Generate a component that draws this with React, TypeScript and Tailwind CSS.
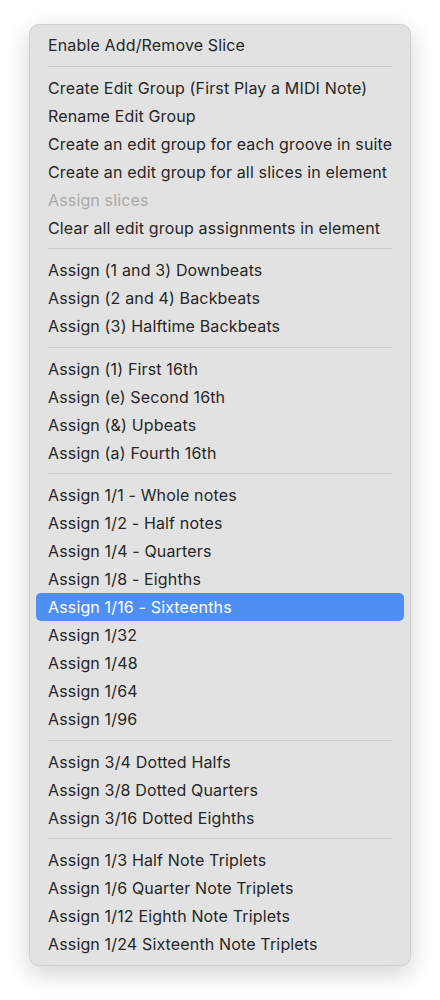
const groups: { label: string; disabled?: boolean; active?: boolean }[][] = [
  [{ label: "Enable Add/Remove Slice" }],
  [
    { label: "Create Edit Group (First Play a MIDI Note)" },
    { label: "Rename Edit Group" },
    { label: "Create an edit group for each groove in suite" },
    { label: "Create an edit group for all slices in element" },
    { label: "Assign slices", disabled: true },
    { label: "Clear all edit group assignments in element" },
  ],
  [
    { label: "Assign (1 and 3) Downbeats" },
    { label: "Assign (2 and 4) Backbeats" },
    { label: "Assign (3) Halftime Backbeats" },
  ],
  [
    { label: "Assign (1) First 16th" },
    { label: "Assign (e) Second 16th" },
    { label: "Assign (&) Upbeats" },
    { label: "Assign (a) Fourth 16th" },
  ],
  [
    { label: "Assign 1/1 - Whole notes" },
    { label: "Assign 1/2 - Half notes" },
    { label: "Assign 1/4 - Quarters" },
    { label: "Assign 1/8 - Eighths" },
    { label: "Assign 1/16 - Sixteenths", active: true },
    { label: "Assign 1/32" },
    { label: "Assign 1/48" },
    { label: "Assign 1/64" },
    { label: "Assign 1/96" },
  ],
  [
    { label: "Assign 3/4 Dotted Halfs" },
    { label: "Assign 3/8 Dotted Quarters" },
    { label: "Assign 3/16 Dotted Eighths" },
  ],
  [
    { label: "Assign 1/3 Half Note Triplets" },
    { label: "Assign 1/6 Quarter Note Triplets" },
    { label: "Assign 1/12 Eighth Note Triplets" },
    { label: "Assign 1/24 Sixteenth Note Triplets" },
  ],
];

export default function App() {
  return (
    <div className="min-h-screen bg-white pt-[24px] pl-[29px]">
      <div
        className="w-[382px] rounded-[10px] border border-[#cfcfcf] bg-[#e2e2e2] px-[6px] pt-[6px] pb-[7px] shadow-[0_8px_24px_rgba(0,0,0,0.18)]"
        style={{ fontFamily: "Inter, 'Noto Sans', sans-serif" }}
      >
        {groups.map((group, gi) => (
          <div key={gi}>
            {gi > 0 && (
              <div className="flex h-[14.5px] items-center px-[12px]">
                <div className="h-px w-full bg-[#c8c8c8]" />
              </div>
            )}
            {group.map((item) => (
              <div
                key={item.label}
                className={
                  "flex h-[28px] items-center whitespace-nowrap rounded-[5px] px-[12px] text-[16px] tracking-[0.15px] " +
                  (item.active
                    ? "bg-[#4f8ff3] text-white"
                    : item.disabled
                      ? "text-[#a9a9a9]"
                      : "text-[#262626]")
                }
              >
                {item.label}
              </div>
            ))}
          </div>
        ))}
      </div>
    </div>
  );
}
